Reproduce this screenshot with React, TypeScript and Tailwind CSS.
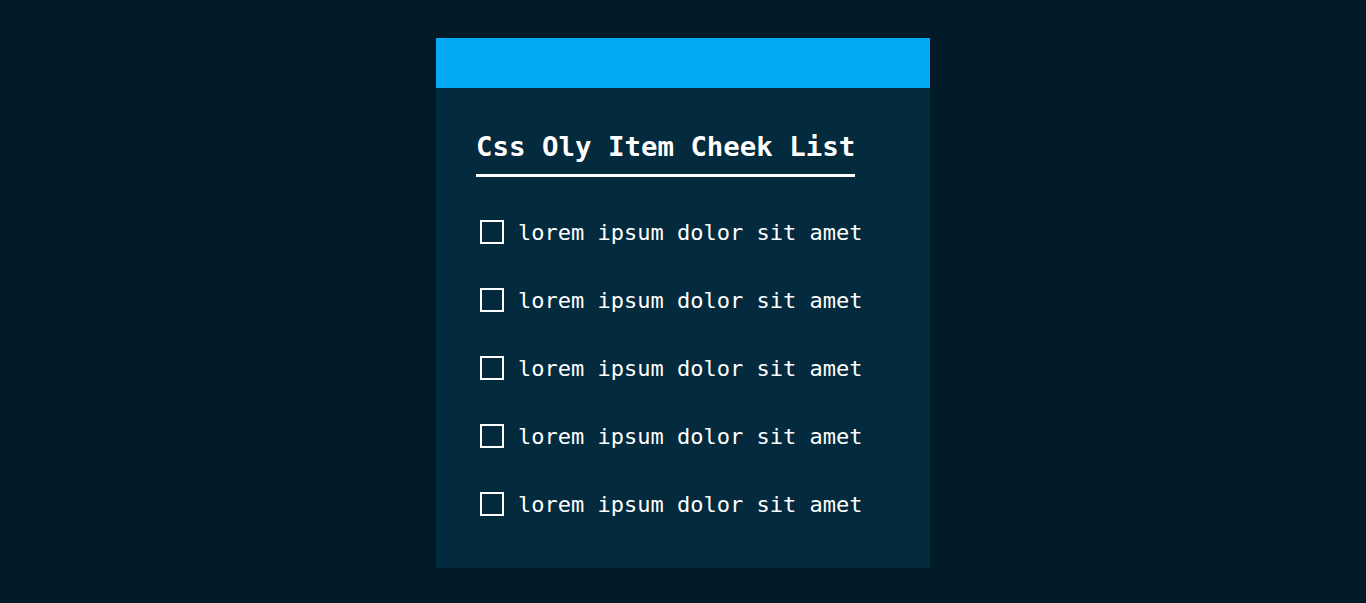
import React from "react";

const items = [
  "lorem ipsum dolor sit amet",
  "lorem ipsum dolor sit amet",
  "lorem ipsum dolor sit amet",
  "lorem ipsum dolor sit amet",
  "lorem ipsum dolor sit amet",
];

export default function App() {
  return (
    <div className="min-h-[603px] w-full bg-[#001a27] flex justify-center pt-[38px] pb-[35px] font-['DejaVu_Sans_Mono',monospace]">
      <div className="w-[494px] h-[530px] bg-[#042a3d] flex flex-col">
        <div className="h-[50px] bg-[#03a9f4]" />
        <div className="px-10 pt-[43px] flex flex-col items-start">
          <h1 className="text-[27.4px] leading-[32px] font-bold text-white pb-[11px] border-b-[3px] border-white">
            Css Oly Item Cheek List
          </h1>
          <ul className="mt-[43px] flex flex-col gap-[44px]">
            {items.map((t, i) => (
              <li key={i} className="flex items-center h-6">
                <span className="ml-1 w-6 h-6 border-2 border-white shrink-0" />
                <span className="ml-[14px] mt-[2px] text-[22px] leading-[24px] text-white">{t}</span>
              </li>
            ))}
          </ul>
        </div>
      </div>
    </div>
  );
}
